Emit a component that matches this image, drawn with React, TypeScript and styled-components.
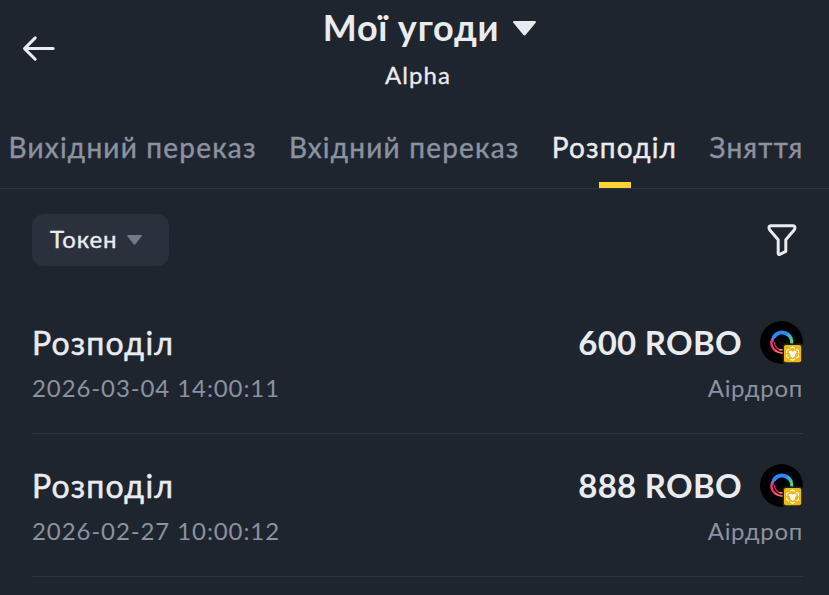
import React from 'react';
import styled, { createGlobalStyle } from 'styled-components';

const GlobalStyle = createGlobalStyle`
  * { box-sizing: border-box; }
  body {
    margin: 0;
    background: #1f252f;
    color: #eaebef;
    font-family: Lato, 'Liberation Sans', sans-serif;
  }
`;

const Page = styled.div`
  height: 595px;
  overflow: hidden;
`;

const Header = styled.header`
  display: grid;
  grid-template-columns: 100px 1fr 100px;
  height: 108px;
`;

const BackButton = styled.button`
  display: flex;
  align-items: flex-start;
  padding: 35px 0 0 22px;
  border: 0;
  background: none;
  color: #eaebef;
`;

const Heading = styled.div`
  display: flex;
  flex-direction: column;
  align-items: center;
`;

const Title = styled.h1`
  display: flex;
  align-items: center;
  gap: 14px;
  height: 46px;
  margin: 4px 0 0 30px;
  font-size: 36px;
  font-weight: 700;
  line-height: 46px;
  letter-spacing: 0.8px;

  svg { margin-top: 2px; }
`;

const Subtitle = styled.div`
  margin: 9px 0 0 7px;
  font-size: 24px;
  line-height: 32px;
  letter-spacing: 1.1px;
  -webkit-text-stroke: 0.3px;
`;

const Tabs = styled.nav`
  display: flex;
  gap: 32.2px;
  height: 81px;
  padding-left: 8.5px;
  border-bottom: 1px solid #2d3440;
`;

const Tab = styled.div<{ $active?: boolean }>`
  display: flex;
  flex-direction: column;
  align-items: center;
  justify-content: space-between;
  padding-top: 19px;
  color: ${p => p.$active ? '#eaebef' : '#8b92a1'};
  font-size: 28px;
  line-height: 40px;
  letter-spacing: 1.2px;
  white-space: nowrap;
  -webkit-text-stroke: 0.4px;
`;

const TabLine = styled.div`
  width: 32px;
  height: 6px;
  background: #fcd535;
`;

const Filters = styled.div`
  display: flex;
  align-items: flex-start;
  justify-content: space-between;
  height: 102px;
  padding: 25px 32px 0;
`;

const TokenSelect = styled.button`
  display: flex;
  align-items: center;
  gap: 10px;
  width: 137px;
  height: 52px;
  padding: 0 0 0 18px;
  border: 0;
  border-radius: 12px;
  background: #2a303c;
  color: #eaebef;
  font-family: inherit;
  font-size: 24px;
  line-height: 32px;
  letter-spacing: 0.9px;
  -webkit-text-stroke: 0.4px;
`;

const TokenLabel = styled.span`
  padding-bottom: 2px;
`;

const FilterButton = styled.button`
  display: flex;
  margin-top: 9px;
  padding: 0;
  border: 0;
  background: none;
  color: #eaebef;
`;

const List = styled.div`
  padding: 0 26px 0 32px;
`;

const Row = styled.div`
  display: flex;
  justify-content: space-between;
  height: 143px;
  padding-top: 29px;
  border-bottom: 1px solid #2d3440;
`;

const Info = styled.div``;

const Name = styled.div`
  height: 46px;
  font-size: 32px;
  line-height: 46px;
  letter-spacing: 1.25px;
  -webkit-text-stroke: 0.5px;
`;

const Muted = styled.div<{ $spacing: number }>`
  height: 44px;
  color: #8b92a1;
  font-size: 24px;
  line-height: 44px;
  letter-spacing: ${p => p.$spacing}px;
`;

const Result = styled.div`
  display: flex;
  flex-direction: column;
  align-items: flex-end;
`;

const Amount = styled.div`
  display: flex;
  align-items: center;
  gap: 18px;
  height: 46px;
  font-size: 33px;
  font-weight: 700;
  line-height: 44px;
  letter-spacing: 0.3px;
`;

const AmountText = styled.span`
  padding-bottom: 2px;
`;

const TokenIcon = styled.svg`
  display: block;
  width: 43px;
  height: 43px;
  margin-bottom: 2px;
`;

const ArrowLeft = () => (
  <svg width="34" height="28" viewBox="0 0 34 28" fill="none" stroke="currentColor" strokeWidth="3" strokeLinecap="round" strokeLinejoin="round">
    <path d="M13.2 2.9 2.5 13.6l10.7 10.7M2.5 13.6h28.7" />
  </svg>
);

const Caret = ({ width, height, color }: { width: number, height: number, color: string }) => (
  <svg width={width} height={height} viewBox="0 0 22 15" preserveAspectRatio="none" fill={color}>
    <path d="M1.2 0H20.8Q22.7.4 21.5 2L12.2 13.8Q11 15.3 9.8 13.8L.5 2Q-.7.4 1.2 0Z" />
  </svg>
);

const Funnel = () => (
  <svg width="30" height="34" viewBox="0 0 30 34" fill="none" stroke="currentColor" strokeWidth="3" strokeLinejoin="round">
    <path d="M4 2.8H26Q28.1 2.9 27.9 5.2 27.8 6.4 26.9 7.3L18.8 16.7V28.3L12.7 31.5Q11.3 31.9 11.2 30.3V16.7L3 7.3Q2.1 6.3 2 5.2 1.9 2.9 4 2.8Z" />
  </svg>
);

const RoboIcon = () => (
  <TokenIcon viewBox="0 0 43 43">
    <circle cx="21.5" cy="21.5" r="21.5" fill="#000" />
    <g fill="none" transform="translate(.4 .2)">
      <path d="M11.6 21.3a9.8 9.8 0 0 1 2.5-6.4" stroke="#9a60e8" strokeWidth="2.8" />
      <path d="M13.2 16.2a9.7 9.7 0 0 1 14.6-2.8" stroke="#2f86ff" strokeWidth="4" />
      <path d="M27.2 13a9.8 9.8 0 0 1 3.5 4.5" stroke="#28b8d5" strokeWidth="3.6" />
      <path d="M30.4 16.6a9.8 9.8 0 0 1 .8 6" stroke="#42d98a" strokeWidth="3" />
      <path d="M11.2 19.6a10 10 0 0 0 4.4 10.2" stroke="#f52f75" strokeWidth="2.4" />
      <path d="M14.2 21a7.8 7.8 0 0 0 6.8 8" stroke="#e92d5c" strokeWidth="1.3" />
      <path d="M15 29.3a10.4 10.4 0 0 0 8 2.4" stroke="#ff6b57" strokeWidth="2" />
      <path d="M19 28.6h4" stroke="#ffa24d" strokeWidth="1.4" />
    </g>
    <rect x="22.5" y="22.5" width="20.5" height="20.5" rx="3.5" fill="#1f252f" />
    <rect x="24" y="24" width="17.2" height="17.2" rx="2" fill="#f0b90b" />
    <g fill="none" stroke="#fff" strokeWidth="1.1">
      <path d="M30.4 27.3 32.6 26l2.2 1.3M36.2 28.2l2.3 1.3v2.4M38.5 33.5v2.3l-2.2 1.3M34.8 38l-2.2 1.3-2.2-1.3M28.9 37.1l-2.2-1.3v-2.3M26.7 31.9v-2.4l2.3-1.3" />
    </g>
    <path d="M28.8 30.3 30.4 29.5 32.6 30.7 34.8 29.5 36.4 30.3V32L35 33V35.2L32.6 36.7 30.2 35.2V33L28.8 32Z" fill="#fff" />
  </TokenIcon>
);

const tabs = ['Вихідний переказ', 'Вхідний переказ', 'Розподіл', 'Зняття'];

const deals = [
  { amount: '600 ROBO', date: '2026-03-04 14:00:11' },
  { amount: '888 ROBO', date: '2026-02-27 10:00:12' },
];

export default function App() {
  return (<>
    <GlobalStyle />
    <Page>
      <Header>
        <BackButton><ArrowLeft /></BackButton>
        <Heading>
          <Title>Мої угоди <Caret width={23} height={15} color="#eaebef" /></Title>
          <Subtitle>Alpha</Subtitle>
        </Heading>
      </Header>
      <Tabs>
        {tabs.map(tab => (
          <Tab key={tab} $active={tab === 'Розподіл'}>
            {tab}
            {tab === 'Розподіл' && <TabLine />}
          </Tab>
        ))}
      </Tabs>
      <Filters>
        <TokenSelect><TokenLabel>Токен</TokenLabel> <Caret width={15} height={10} color="#717a8a" /></TokenSelect>
        <FilterButton><Funnel /></FilterButton>
      </Filters>
      <List>
        {deals.map(deal => (
          <Row key={deal.date}>
            <Info>
              <Name>Розподіл</Name>
              <Muted $spacing={0.9}>{deal.date}</Muted>
            </Info>
            <Result>
              <Amount><AmountText>{deal.amount}</AmountText> <RoboIcon /></Amount>
              <Muted $spacing={0.7}>Аірдроп</Muted>
            </Result>
          </Row>
        ))}
      </List>
    </Page>
  </>);
}
